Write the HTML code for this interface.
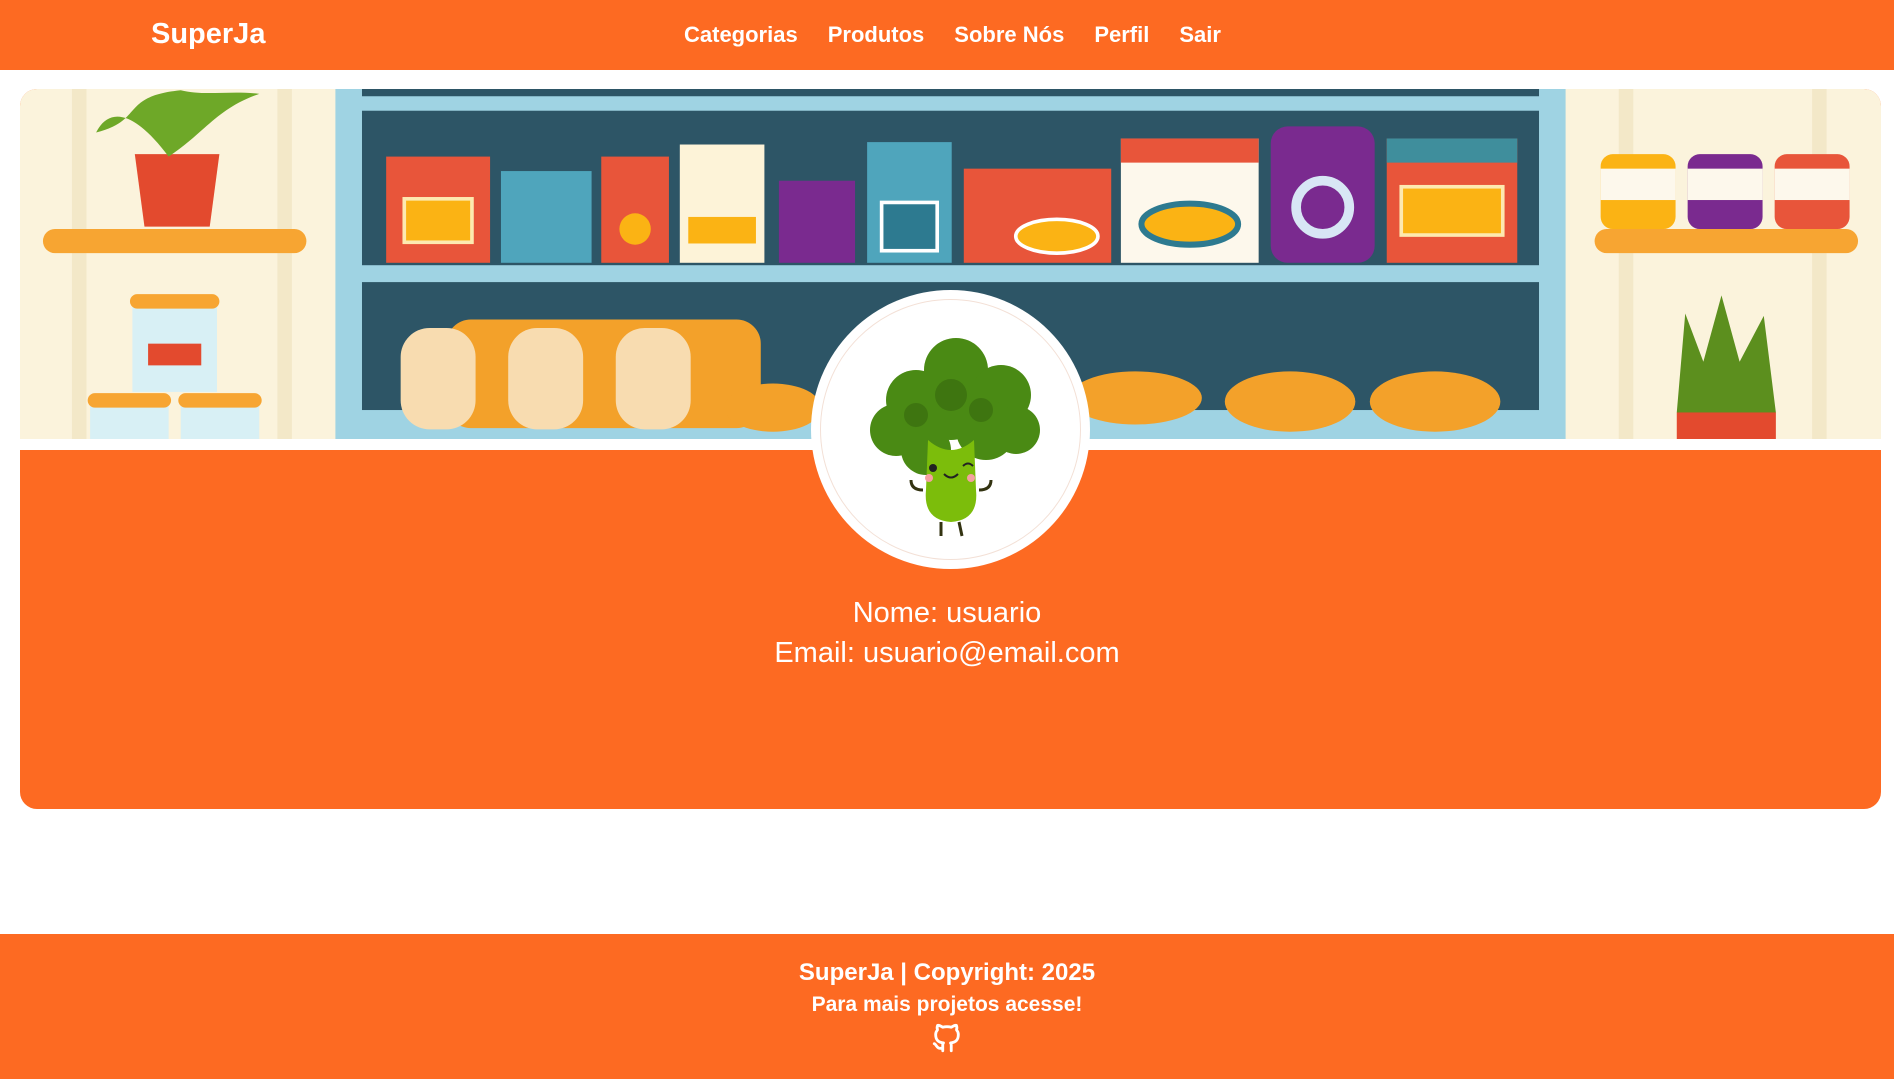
<!DOCTYPE html>
<html><head><meta charset="utf-8"><style>
*{margin:0;padding:0;box-sizing:border-box}
body{width:1894px;height:1079px;background:#fff;font-family:"Liberation Sans",sans-serif;position:relative;overflow:hidden}
.nav{position:absolute;left:0;top:0;width:1894px;height:70px;background:#fd6a22;color:#fff;font-weight:bold}
.brand{position:absolute;left:151px;top:18px;font-size:29px}
.links{position:absolute;left:684px;top:22px;font-size:22px;display:flex;gap:30px}
.card{position:absolute;left:20px;top:89px;width:1861px;height:720px;border-radius:17px;overflow:hidden;background:#fd6a22}
.banner{position:absolute;left:0;top:0;width:1861px;height:350px}
.gap{position:absolute;left:0;top:350px;width:1861px;height:11px;background:#fff}
.av{position:absolute;left:811px;top:290px;width:279px;height:279px;border-radius:50%;background:#fff}
.av .in{position:absolute;left:9px;top:9px;width:261px;height:261px;border-radius:50%;border:1px solid #f3e0d6}
.info{position:absolute;left:0;top:593px;width:1894px;text-align:center;color:#fff;font-size:29px;line-height:40px}
.foot{position:absolute;left:0;top:934px;width:1894px;height:145px;background:#fd6a22;color:#fff;text-align:center;font-weight:bold}
</style></head><body>
<div class="nav"><div class="brand">SuperJa</div>
<div class="links"><span>Categorias</span><span>Produtos</span><span>Sobre Nós</span><span>Perfil</span><span>Sair</span></div></div>
<div class="card">
<svg class="banner" viewBox="17 74 1540 290" preserveAspectRatio="none">
<rect x="17" y="74" width="1540" height="290" fill="#fbf3dc"/>
<rect x="60" y="74" width="12" height="290" fill="#f3e8c8"/><rect x="230" y="74" width="12" height="290" fill="#f3e8c8"/>
<rect x="1340" y="74" width="12" height="290" fill="#f3e8c8"/><rect x="1500" y="74" width="12" height="290" fill="#f3e8c8"/>
<rect x="278" y="74" width="1018" height="290" fill="#9fd3e3"/>
<rect x="300" y="92" width="974" height="128" fill="#2d5566"/>
<rect x="300" y="234" width="974" height="106" fill="#2d5566"/>
<rect x="300" y="74" width="974" height="6" fill="#2d5566"/>
<rect x="320" y="130" width="86" height="88" fill="#e8553a"/><rect x="335" y="165" width="56" height="36" fill="#fbb314" stroke="#fde9b0" stroke-width="3"/>
<rect x="415" y="142" width="75" height="76" fill="#4fa5bc"/>
<rect x="498" y="130" width="56" height="88" fill="#e8553a"/><circle cx="526" cy="190" r="13" fill="#fbb314"/>
<rect x="563" y="120" width="70" height="98" fill="#fdf3d8"/><rect x="570" y="180" width="56" height="22" fill="#fbb314"/>
<rect x="645" y="150" width="63" height="68" fill="#7a2a8f"/>
<rect x="718" y="118" width="70" height="100" fill="#4fa5bc"/><rect x="730" y="168" width="46" height="40" fill="#2d7a90" stroke="#fff" stroke-width="3"/>
<rect x="798" y="140" width="122" height="78" fill="#e8553a"/><ellipse cx="875" cy="196" rx="34" ry="14" fill="#fbb314" stroke="#fff" stroke-width="3"/>
<rect x="928" y="115" width="114" height="103" fill="#fdf8ec"/><rect x="928" y="115" width="114" height="20" fill="#e8553a"/><ellipse cx="985" cy="186" rx="40" ry="17" fill="#fbb314" stroke="#2d7a90" stroke-width="5"/>
<rect x="1052" y="105" width="86" height="113" rx="14" fill="#7a2a8f"/><circle cx="1095" cy="172" r="22" fill="#7a2a8f" stroke="#d8e6f5" stroke-width="8"/>
<rect x="1148" y="115" width="108" height="103" fill="#e8553a"/><rect x="1148" y="115" width="108" height="20" fill="#3f8e9c"/><rect x="1160" y="155" width="84" height="40" fill="#fbb314" stroke="#fde9b0" stroke-width="3"/>
<g fill="#f3a12a"><rect x="370" y="265" width="260" height="90" rx="20"/></g>
<g fill="#f8dcb0"><rect x="332" y="272" width="62" height="84" rx="24"/><rect x="421" y="272" width="62" height="84" rx="24"/><rect x="510" y="272" width="62" height="84" rx="24"/></g>
<ellipse cx="640" cy="338" rx="40" ry="20" fill="#f3a12a"/><ellipse cx="940" cy="330" rx="55" ry="22" fill="#f3a12a"/>
<ellipse cx="1068" cy="333" rx="54" ry="25" fill="#f3a12a"/><ellipse cx="1188" cy="333" rx="54" ry="25" fill="#f3a12a"/>
<rect x="36" y="190" width="218" height="20" rx="10" fill="#f7a532"/>
<path d="M112 128h70l-8 60h-54z" fill="#e34a2e"/><path d="M140 130 C110 90 90 90 80 110 C120 100 100 80 150 75 C170 80 190 75 215 78 C180 90 170 110 140 130z" fill="#6ea828"/>
<rect x="110" y="250" width="70" height="75" fill="#d8f0f5"/><rect x="108" y="244" width="74" height="12" rx="6" fill="#f7a532"/><rect x="123" y="285" width="44" height="18" fill="#e34a2e"/>
<rect x="75" y="330" width="65" height="34" fill="#d8f0f5"/><rect x="150" y="330" width="65" height="34" fill="#d8f0f5"/>
<rect x="73" y="326" width="69" height="12" rx="6" fill="#f7a532"/><rect x="148" y="326" width="69" height="12" rx="6" fill="#f7a532"/>
<rect x="1325" y="128" width="62" height="62" rx="10" fill="#fbb314"/><rect x="1397" y="128" width="62" height="62" rx="10" fill="#7a2a8f"/><rect x="1469" y="128" width="62" height="62" rx="10" fill="#e8553a"/>
<rect x="1325" y="140" width="62" height="26" fill="#fdf8ec"/><rect x="1397" y="140" width="62" height="26" fill="#fdf8ec"/><rect x="1469" y="140" width="62" height="26" fill="#fdf8ec"/>
<rect x="1320" y="190" width="218" height="20" rx="10" fill="#f7a532"/>
<path d="M1388 342 L1395 260 L1410 300 L1425 245 L1440 300 L1460 262 L1470 342z" fill="#5c8f1e"/>
<rect x="1388" y="342" width="82" height="22" fill="#e34a2e"/>
</svg>
<div class="gap"></div>
</div>
<div class="av"><div class="in"></div>
<svg style="position:absolute;left:0;top:0" width="279" height="279" viewBox="0 0 279 279">
<g fill="#4a8a14"><circle cx="105" cy="110" r="30"/><circle cx="145" cy="80" r="32"/><circle cx="190" cy="105" r="30"/><circle cx="205" cy="140" r="24"/><circle cx="85" cy="140" r="26"/><circle cx="115" cy="160" r="25"/><circle cx="175" cy="140" r="30"/><circle cx="140" cy="120" r="30"/></g>
<g fill="#3e7510"><circle cx="140" cy="105" r="16"/><circle cx="170" cy="120" r="12"/><circle cx="105" cy="125" r="12"/></g>
<path d="M117 150 Q140 170 163 150 L165 200 Q168 230 140 232 Q112 230 115 200z" fill="#7cbd0b"/>
<circle cx="122" cy="178" r="4" fill="#222"/><path d="M152 176 q5 -5 10 0" stroke="#222" stroke-width="2" fill="none"/>
<path d="M133 184 q7 7 14 0" stroke="#222" stroke-width="2" fill="none"/>
<circle cx="118" cy="188" r="4" fill="#f5a0a0"/><circle cx="160" cy="188" r="4" fill="#f5a0a0"/>
<path d="M112 200 q-12 0 -12 -10 M168 200 q12 0 12 -10 M130 232 v14 M148 232 l3 14" stroke="#331" stroke-width="3" fill="none"/>
</svg></div>
<div class="info">Nome: usuario<br>Email: usuario@email.com</div>
<div class="foot">
<div style="font-size:24px;margin-top:25px">SuperJa | Copyright: 2025</div>
<div style="font-size:21px;margin-top:6px">Para mais projetos acesse!</div>
<svg style="margin-top:4px" width="34" height="34" viewBox="0 0 24 24" fill="none" stroke="#fff" stroke-width="2" stroke-linecap="round" stroke-linejoin="round"><path d="M9 19c-4.3 1.4-4.3-2.5-6-3m12 5v-3.5c0-1 .1-1.4-.5-2 2.8-.3 5.5-1.4 5.5-6a4.6 4.6 0 0 0-1.3-3.2 4.2 4.2 0 0 0-.1-3.2s-1.1-.3-3.5 1.3a12.3 12.3 0 0 0-6.2 0C6.5 2.8 5.4 3.1 5.4 3.1a4.2 4.2 0 0 0-.1 3.2A4.6 4.6 0 0 0 4 9.5c0 4.6 2.7 5.7 5.5 6-.6.6-.6 1.2-.5 2V21"/></svg>
</div>
</body></html>
